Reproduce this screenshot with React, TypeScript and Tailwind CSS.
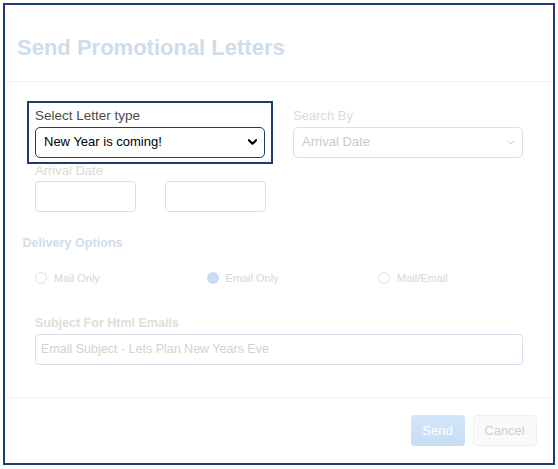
import React from 'react';

const font = { fontFamily: '"Liberation Sans", Arial, sans-serif' };

function Chevron({ className }: { className: string }) {
  return (
    <svg viewBox="0 0 10 6" className={className} fill="none">
      <polyline points="1,1 5,5 9,1" stroke="currentColor" strokeLinecap="round" strokeLinejoin="round" />
    </svg>
  );
}

function Radio({ label, checked }: { label: string; checked?: boolean }) {
  return (
    <div className="flex items-center pl-[12.5px] h-[16px]">
      {checked ? (
        <span className="w-[12px] h-[12px] rounded-full bg-[#cadcf4]" />
      ) : (
        <span className="w-[12px] h-[12px] rounded-full border border-[#e2e2e2] bg-white" />
      )}
      <span className="ml-[7px] text-[11px] leading-[16px] text-[#d6d6d6]">{label}</span>
    </div>
  );
}

export default function App() {
  return (
    <div className="w-[558px] h-[469px] bg-white pt-[3px] pl-[3px]" style={font}>
      <div className="w-[552px] h-[462px] border-2 border-[#1b3e6f] flex flex-col bg-white">
        {/* Header */}
        <div className="h-[77px] border-b border-[#f4f4f4] pl-[12px] pt-[31px]">
          <h1 className="text-[22px] leading-[24px] font-bold text-[#cfdce9]">Send Promotional Letters</h1>
        </div>

        {/* Body */}
        <div className="flex-1 pl-[17.5px] pt-[19px]">
          <div className="flex items-start">
            <div className="ml-[4.5px] w-[246px] border-2 border-[#1b3e6f] px-[6px] pt-[5px] pb-[4px]">
              <div className="text-[13.5px] leading-[16px] text-[#4a4a4a]">Select Letter type</div>
              <div className="mt-[3px] h-[31px] rounded-[5px] border-[1.5px] border-[#1b3e6f] flex items-center justify-between pl-[8px] pr-[7px] pb-[2px]">
                <span className="text-[13px] text-black">New Year is coming!</span>
                <Chevron className="w-[9px] h-[6px] text-black [&>polyline]:stroke-[2.4]" />
              </div>
            </div>
            <div className="ml-[20px] w-[230px] pt-[7px]">
              <div className="text-[13px] leading-[16px] text-[#dadada]">Search By</div>
              <div className="mt-[3px] h-[31px] rounded-[5px] border border-[#d6e0ec] flex items-center justify-between pl-[8px] pr-[7px] pb-[1px]">
                <span className="text-[13px] text-[#c9c9c9]">Arrival Date</span>
                <Chevron className="w-[8px] h-[5px] text-[#c4c4c4] [&>polyline]:stroke-[1.2]" />
              </div>
            </div>
          </div>

          <div className="ml-[12.5px]">
            <div className="text-[13px] leading-[14px] text-[#dadada]">Arrival Date</div>
            <div className="mt-[3px] flex gap-[29px]">
              <div className="w-[101px] h-[31px] rounded-[4px] border border-[#d6e0ec]" />
              <div className="w-[101px] h-[31px] rounded-[4px] border border-[#d6e0ec]" />
            </div>
          </div>

          <div className="mt-[22.5px] text-[12.6px] leading-[16px] font-bold text-[#d2dde9]">Delivery Options</div>

          <div className="mt-[19px] grid grid-cols-3 w-[514.5px]">
            <Radio label="Mail Only" />
            <Radio label="Email Only" checked />
            <Radio label="Mail/Email" />
          </div>

          <div className="ml-[12.5px] mt-[30.5px]">
            <div className="text-[12.5px] leading-[15px] font-bold text-[#dedede]">Subject For Html Emails</div>
            <div className="mt-[2.5px] w-[488px] h-[31px] rounded-[4px] border border-[#d6e0ec] flex items-center pl-[5px]">
              <span className="text-[12.5px] text-[#d2d2d2]">Email Subject - Lets Plan New Years Eve</span>
            </div>
          </div>
        </div>

        {/* Footer */}
        <div className="h-[66px] border-t border-[#f4f4f4] flex items-center justify-end gap-[8px] pr-[16.5px]">
          <button className="w-[54px] h-[31px] rounded-[4px] bg-gradient-to-b from-[#d3e7f8] to-[#c6ddf3] text-[13px] text-white">Send</button>
          <button className="w-[64px] h-[31px] rounded-[4px] border border-[#efefef] bg-[#fafafa] text-[13px] text-[#cfcfcf]">Cancel</button>
        </div>
      </div>
    </div>
  );
}
